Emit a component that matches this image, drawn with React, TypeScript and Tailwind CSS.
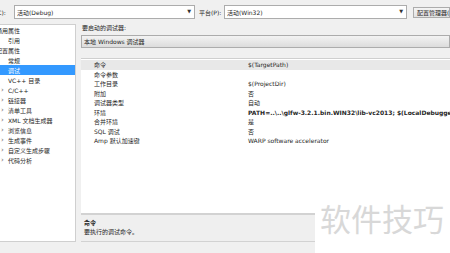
import React from 'react';

const font = { fontFamily: '"DejaVu Sans", "Noto Sans CJK SC", sans-serif' };

const treeItems: { label: string; level: 0 | 1; arrow?: boolean; selected?: boolean }[] = [
  { label: '通用属性', level: 0 },
  { label: '引用', level: 1 },
  { label: '配置属性', level: 0 },
  { label: '常规', level: 1 },
  { label: '调试', level: 1, selected: true },
  { label: 'VC++ 目录', level: 1 },
  { label: 'C/C++', level: 1, arrow: true },
  { label: '链接器', level: 1, arrow: true },
  { label: '清单工具', level: 1, arrow: true },
  { label: 'XML 文档生成器', level: 1, arrow: true },
  { label: '浏览信息', level: 1, arrow: true },
  { label: '生成事件', level: 1, arrow: true },
  { label: '自定义生成步骤', level: 1, arrow: true },
  { label: '代码分析', level: 1, arrow: true },
];

const props: { name: string; value: string; bold?: boolean }[] = [
  { name: '命令', value: '$(TargetPath)' },
  { name: '命令参数', value: '' },
  { name: '工作目录', value: '$(ProjectDir)' },
  { name: '附加', value: '否' },
  { name: '调试器类型', value: '自动' },
  { name: '环境', value: 'PATH=..\\..\\glfw-3.2.1.bin.WIN32\\lib-vc2013; $(LocalDebuggerEnvironment)', bold: true },
  { name: '合并环境', value: '是' },
  { name: 'SQL 调试', value: '否' },
  { name: 'Amp 默认加速键', value: 'WARP software accelerator' },
];

const Combo = ({ text, className }: { text: string; className: string }) => (
  <div className={`h-[14px] shrink-0 bg-white border border-[#acacac] flex items-center pl-[2px] pr-[3px] ${className}`}>
    <span className="flex-1 whitespace-nowrap overflow-hidden">{text}</span>
    <span className="text-[5px] text-[#333]">▼</span>
  </div>
);

export default function App() {
  return (
    <div className="w-[450px] h-[253px] overflow-hidden bg-[#f0f0f0] relative text-[6px] text-[#262626]" style={font}>
      {/* top bar */}
      <div className="h-[24px] flex items-center">
        <span className="-ml-[17px] w-[31px] shrink-0 whitespace-nowrap">配置(C):</span>
        <Combo text="活动(Debug)" className="w-[181px]" />
        <span className="ml-[4px] w-[25px] shrink-0 whitespace-nowrap">平台(P):</span>
        <Combo text="活动(Win32)" className="w-[183px]" />
        <div className="ml-[6px] h-[11px] flex-1 min-w-0 border border-[#acacac] bg-gradient-to-b from-[#f4f4f4] to-[#e2e2e2] flex items-center pl-[3px] whitespace-nowrap overflow-hidden">
          配置管理器(O)...
        </div>
      </div>

      <div className="flex h-[218px]">
        {/* tree */}
        <div className="w-[76px] shrink-0 bg-white border-y border-r border-[#cfcfcf] overflow-hidden">
          {treeItems.map((t) => (
            <div
              key={t.label}
              className={`h-[10px] flex items-center whitespace-nowrap ${t.selected ? 'bg-[#3399ff] text-white' : ''}`}
            >
              {t.level === 0 ? (
                <span className="-ml-[4px]">{t.label}</span>
              ) : (
                <>
                  <span className="w-[8px] shrink-0 pl-[1px] text-[7px] leading-[7px] text-[#666]">{t.arrow ? '›' : ''}</span>
                  <span>{t.label}</span>
                </>
              )}
            </div>
          ))}
        </div>

        {/* right side */}
        <div className="ml-[5px] flex-1 min-w-0 flex flex-col">
          <div className="h-[11px] pl-[1px] leading-[8px]">要启动的调试器:</div>
          <div className="h-[13px] border border-[#acacac] bg-gradient-to-b from-[#f3f3f3] to-[#dcdcdc] flex items-center pl-[2px] whitespace-nowrap">
            本地 Windows 调试器
          </div>
          <div className="h-[10px]" />
          <div className="flex-1 bg-white border-t border-[#cfcfcf] pt-[1px] overflow-hidden">
            {props.map((p, i) => (
              <div key={p.name} className={`h-[9.5px] flex items-center whitespace-nowrap ${i === 0 ? 'bg-[#e8e8e8]' : ''}`}>
                <span className="w-[167px] shrink-0 pl-[13px]">{p.name}</span>
                <span className={p.bold ? 'font-bold' : ''}>{p.value}</span>
              </div>
            ))}
          </div>
          <div className="h-[29px] border-t-2 border-b border-[#d2d2d2] bg-[#efefef] pl-[3px] pt-[3px] leading-[9px]">
            <div className="font-bold">命令</div>
            <div>要执行的调试命令。</div>
          </div>
        </div>
      </div>

      {/* watermark */}
      <div className="absolute right-0 bottom-0 w-[135px] h-[53px] bg-white pl-[5px] pt-[1px]">
        <div className="text-[31px] leading-[33px] text-[#d8d8d8] whitespace-nowrap" style={{ fontFamily: '"Noto Sans CJK SC", sans-serif' }}>
          软件技巧
        </div>
      </div>
    </div>
  );
}
